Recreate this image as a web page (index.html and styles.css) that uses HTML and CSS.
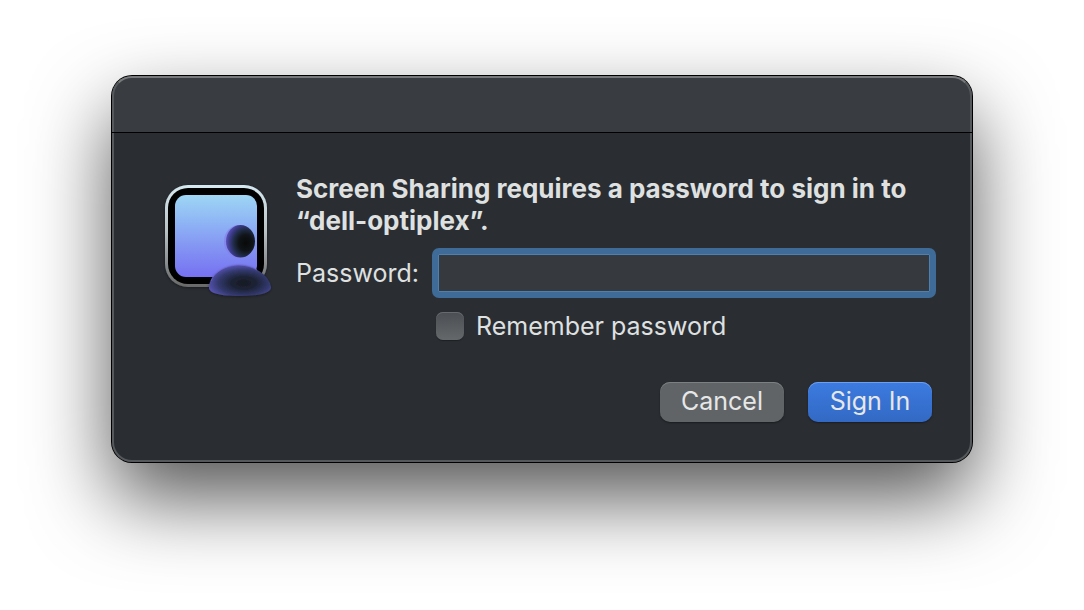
FILE: index.html
```html
<!DOCTYPE html>
<html lang="en">
<head>
<meta charset="utf-8">
<meta name="viewport" content="width=device-width, initial-scale=1">
<title>Screen Sharing</title>
<link rel="stylesheet" href="styles.css">
</head>
<body>
<main class="dialog" role="dialog" aria-labelledby="dialog-title">
  <header class="titlebar"></header>
  <div class="content">
    <svg class="app-icon" viewBox="0 0 108 114" aria-hidden="true">
      <defs>
        <linearGradient id="rim" x1="0" y1="0" x2="0" y2="1">
          <stop offset="0" stop-color="#d5e9f0"/>
          <stop offset=".45" stop-color="#b9c2c5"/>
          <stop offset="1" stop-color="#686868"/>
        </linearGradient>
        <linearGradient id="screen" x1="0" y1="0" x2="0" y2="1">
          <stop offset="0" stop-color="#9ed6f4"/>
          <stop offset=".3" stop-color="#90b8f5"/>
          <stop offset=".65" stop-color="#8393f3"/>
          <stop offset="1" stop-color="#7671f2"/>
        </linearGradient>
        <radialGradient id="head" cx=".68" cy=".55" r=".7">
          <stop offset="0" stop-color="#080909"/>
          <stop offset=".35" stop-color="#101418"/>
          <stop offset=".6" stop-color="#202c48"/>
          <stop offset=".8" stop-color="#3b3a88"/>
          <stop offset="1" stop-color="#5b54bd"/>
        </radialGradient>
        <radialGradient id="shoulders" cx=".56" cy=".58" r=".58">
          <stop offset="0" stop-color="#161a22"/>
          <stop offset=".35" stop-color="#1d2336"/>
          <stop offset=".7" stop-color="#32386c"/>
          <stop offset="1" stop-color="#5552b0"/>
        </radialGradient>
        <filter id="soft" x="-20%" y="-20%" width="140%" height="150%">
          <feDropShadow dx="0" dy="1" stdDeviation="1.5" flood-opacity=".4"/>
        </filter>
      </defs>
      <rect x="1" y="1" width="102" height="102" rx="23" fill="url(#rim)" filter="url(#soft)"/>
      <rect x="4" y="4" width="96" height="96" rx="20" fill="#000"/>
      <rect x="11" y="11" width="82" height="82" rx="11" fill="url(#screen)"/>
      <ellipse cx="75" cy="57.500" rx="15" ry="16.500" fill="#8580e8" opacity=".7"/>
      <ellipse cx="76.500" cy="57.300" rx="14.500" ry="16.300" fill="url(#head)"/>
      <path d="M45 103C46 90 61 81 75 81s30 9 32 22c.7 5-10 9-31 9S44.300 109 45 103Z" fill="url(#shoulders)" filter="url(#soft)"/>
      <path d="M47 97C50 88 62 81 75 81c7 0 13 2 18 5" fill="none" stroke="#716bd0" stroke-width="1" opacity=".7"/>
    </svg>
    <form class="form">
      <h1 class="heading" id="dialog-title">Screen Sharing requires a password to sign in to “dell-optiplex”.</h1>
      <div class="fields">
        <label class="label" for="password">Password:</label>
        <input class="password" id="password" type="password">
        <div class="remember">
          <input class="checkbox" id="remember" type="checkbox">
          <label class="label" for="remember">Remember password</label>
        </div>
      </div>
      <div class="actions">
        <button class="button" type="button">Cancel</button>
        <button class="button button-primary" type="submit">Sign In</button>
      </div>
    </form>
  </div>
</main>
</body>
</html>
```
FILE: styles.css
```css
* {
  box-sizing: border-box;
}

html {
  background: #fff;
}

body {
  min-height: 100vh;
  margin: 0;
  padding: 76px 112px;
  color: #dfe0e0;
  font-family: Inter, "Liberation Sans", sans-serif;
  font-size: 25px;
  line-height: 32px;
}

.dialog {
  position: relative;
  border-radius: 20px;
  background: #2a2d32;
  box-shadow: 0 0 0 1px #000, 0 36px 80px rgba(0, 0, 0, 0.67);
}

/* Light rim drawn over the title bar and the body */
.dialog::after {
  content: "";
  position: absolute;
  inset: 0;
  border: 2px solid #56595c;
  border-top-color: #77797b;
  border-radius: 20px;
  pointer-events: none;
}

.titlebar {
  height: 56px;
  border-radius: 20px 20px 0 0;
  background: #393c41;
}

.content {
  position: relative;
  z-index: 1;
  display: flex;
  align-items: flex-start;
  gap: 24px;
  padding: 40px 40px 40px 52px;
  border-top: 1px solid #000;
}

.app-icon {
  flex: none;
  width: 108px;
  height: 114px;
  margin-top: 11px;
  overflow: visible;
}

.form {
  flex: 1;
  min-width: 0;
}

.heading {
  margin: 0 0 15px;
  font-size: 26px;
  font-weight: 700;
  line-height: 32px;
}

.fields {
  display: grid;
  grid-template-columns: 140px 1fr;
  align-items: center;
  row-gap: 18px;
}

.password {
  width: 100%;
  height: 42px;
  padding: 0 8px;
  border: 2px solid #3e6b97;
  border-radius: 3px;
  outline: none;
  background: #36393d;
  box-shadow: 0 0 0 4px #3e6b97, inset 0 0 0 1px #4d7fb0;
  color: inherit;
  font: inherit;
}

.remember {
  grid-column: 2;
  display: flex;
  align-items: center;
  gap: 12px;
  height: 28px;
}

.checkbox {
  appearance: none;
  width: 28px;
  height: 28px;
  margin: 0;
  border-radius: 7px;
  background: linear-gradient(#4b4e52, #65686b);
  box-shadow: inset 0 1px #686b6e, 0 1px 1px rgba(0, 0, 0, 0.3);
}

.actions {
  display: flex;
  justify-content: flex-end;
  gap: 24px;
  margin-top: 42px;
}

.button {
  width: 124px;
  height: 40px;
  padding: 0 0 2px;
  border: 0;
  border-radius: 10px;
  background: #616467;
  box-shadow: inset 0 1px #7d8082, 0 1px 2px rgba(0, 0, 0, 0.4);
  color: #e6e7e7;
  font: inherit;
}

.button-primary {
  background: linear-gradient(#3c7be0, #3269c4);
  box-shadow: inset 0 1px #6c9ff0, 0 1px 2px rgba(0, 0, 0, 0.4);
}
```
